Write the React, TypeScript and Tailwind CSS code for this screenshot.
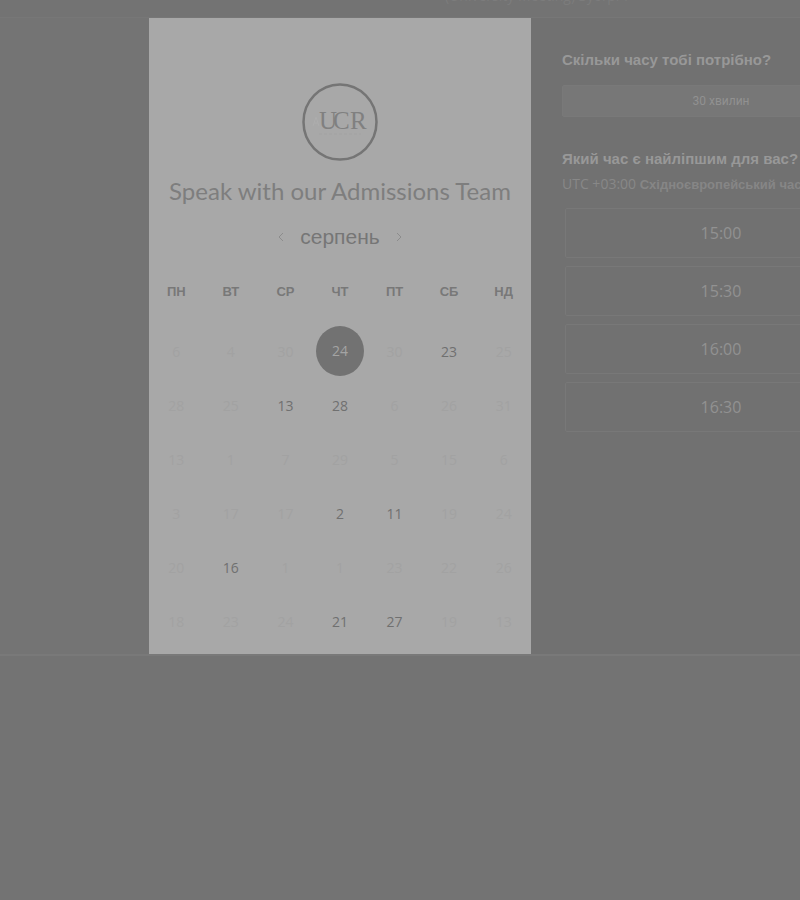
import React, { useState } from "react";

type Day = { n: string; state?: "open" | "selected" };

const weekdays = ["ПН", "ВТ", "СР", "ЧТ", "ПТ", "СБ", "НД"];

const open = (n: string): Day => ({ n, state: "open" });
const off = (n: string): Day => ({ n });

const weeks: Day[][] = [
  [off("6"), off("4"), off("30"), { n: "24", state: "selected" }, off("30"), open("23"), off("25")],
  [off("28"), off("25"), open("13"), open("28"), off("6"), off("26"), off("31")],
  [off("13"), off("1"), off("7"), off("29"), off("5"), off("15"), off("6")],
  [off("3"), off("17"), off("17"), open("2"), open("11"), off("19"), off("24")],
  [off("20"), open("16"), off("1"), off("1"), off("23"), off("22"), off("26")],
  [off("18"), off("23"), off("24"), open("21"), open("27"), off("19"), off("13")],
];

const times = ["15:00", "15:30", "16:00", "16:30"];

function Logo() {
  return (
    <svg viewBox="0 0 76 78" className="h-[78px] w-[76px]" role="img" aria-label="UCR">
      <ellipse cx="38" cy="39" rx="36.5" ry="37.5" fill="none" stroke="#757575" strokeWidth="2.5" />
      <text x="17 31 48" y="46" fill="#808080" fontFamily="'Liberation Serif', serif" fontSize="25">
        UCR
      </text>
      <path d="M11 43l3-9 3 9M12 40h4" fill="none" stroke="#adadad" strokeWidth="1" />
      <path d="M17 51h42" fill="none" stroke="#a2a2a2" strokeWidth="1" strokeDasharray="3 2" />
    </svg>
  );
}

function Chevron({ flip }: { flip?: boolean }) {
  return (
    <svg viewBox="0 0 6 10" className="h-[10px] w-[6px]" fill="none" stroke="#8c8c8c" strokeWidth="1" aria-hidden="true">
      <path d={flip ? "M1 1l4 4-4 4" : "M5 1L1 5l4 4"} />
    </svg>
  );
}

function DayCell({ day }: { day: Day }) {
  if (day.state === "selected") {
    return (
      <button aria-pressed="true" className="h-[50px] w-12 rounded-[50%] bg-[#727272] text-sm text-[#a4a4a4]">
        {day.n}
      </button>
    );
  }
  if (day.state === "open") {
    return <button className="h-[50px] w-12 rounded-[50%] pt-0.5 text-sm text-[#707070]">{day.n}</button>;
  }
  return (
    <button disabled className="h-[50px] w-12 pt-0.5 text-sm text-[#a2a2a2]">
      {day.n}
    </button>
  );
}

export default function App() {
  const [time, setTime] = useState("");
  return (
    <div className="min-h-screen overflow-hidden bg-[#737373] font-['Open_Sans','Noto_Sans',sans-serif]">
      <header className="flex h-[18px] items-start overflow-hidden border-b border-[#777777] pl-[445px]">
        <p className="-mt-3 text-sm leading-4 text-[#7c7c7c]">(University Meeting) Зустріч</p>
      </header>
      <main className="flex border-b-2 border-[#797979] bg-[#747474] pl-[149px]">
        <section className="flex h-[636px] w-[382px] shrink-0 flex-col items-center bg-[#a8a8a8] pt-[65px]" aria-label="Календар">
          <Logo />
          <h1 className="mt-3.5 font-['Lato',sans-serif] text-2xl leading-8 whitespace-nowrap text-[#7e7e7e]">
            Speak with our Admissions Team
          </h1>
          <div className="mt-3.5 flex h-8 items-center gap-4 font-['Liberation_Sans',sans-serif]">
            <button aria-label="Попередній місяць">
              <Chevron />
            </button>
            <h2 className="text-[21px] text-[#767676]">серпень</h2>
            <button aria-label="Наступний місяць">
              <Chevron flip />
            </button>
          </div>
          <table className="mt-4 w-full table-fixed text-center">
            <thead>
              <tr className="h-[55px] align-middle font-['Liberation_Sans',sans-serif] text-[13px] text-[#787878]">
                {weekdays.map((d) => (
                  <th key={d} scope="col" className="pb-2.5">
                    {d}
                  </th>
                ))}
              </tr>
            </thead>
            <tbody>
              {weeks.map((week, i) => (
                <tr key={i} className="h-[54px]">
                  {week.map((day, j) => (
                    <td key={j} className="p-0 align-middle">
                      <DayCell day={day} />
                    </td>
                  ))}
                </tr>
              ))}
            </tbody>
          </table>
        </section>
        <section className="w-[380px] shrink-0 bg-[#717171] px-[31px] pt-8" aria-label="Час зустрічі">
          <h2 className="font-['Liberation_Sans',sans-serif] text-[15px] leading-5 font-bold text-[#989898]">
            Скільки часу тобі потрібно?
          </h2>
          <button className="mt-[15px] h-8 w-full rounded-xs border border-[#797979] bg-[#777777] font-['Roboto',sans-serif] text-xs text-[#919191]">
            30 хвилин
          </button>
          <h2 className="mt-8 font-['Liberation_Sans',sans-serif] text-[15px] leading-5 font-bold whitespace-nowrap text-[#989898]">
            Який час є найліпшим для вас?
          </h2>
          <p className="mt-[3px] text-sm leading-6 whitespace-nowrap text-[#888888]">
            UTC +03:00{" "}
            <span className="font-['Liberation_Sans',sans-serif] text-[13px] font-bold text-[#868686]">
              Східноєвропейський час
            </span>
          </p>
          <div className="mt-[11px] flex flex-col gap-2 px-[3px]">
            {times.map((t) => (
              <button
                key={t}
                aria-pressed={time === t}
                onClick={() => setTime(t)}
                className="h-[50px] rounded-xs border border-[#787878] text-base text-[#929292]"
              >
                {t}
              </button>
            ))}
          </div>
        </section>
      </main>
    </div>
  );
}
